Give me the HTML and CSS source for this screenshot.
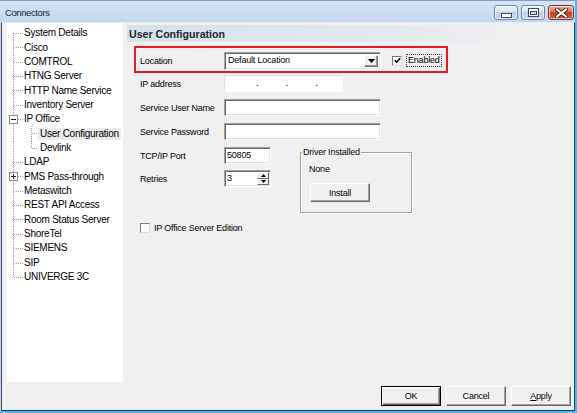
FILE: index.html
```html
<!DOCTYPE html>
<html>
<head>
<meta charset="utf-8">
<title>Connectors</title>
<link rel="stylesheet" href="styles.css">
</head>
<body>
<div class="window">
  <div class="titlebar">
    <span class="title">Connectors</span>
    <div class="caption-buttons">
      <span class="cb cb-min"><svg width="11" height="5" viewBox="0 0 11 5"><rect x="0.5" y="0.5" width="10" height="4" fill="#fff" stroke="#394a61"/></svg></span>
      <span class="cb cb-max"><svg width="11" height="9" viewBox="0 0 11 9"><rect x="0.5" y="0.5" width="10" height="8" fill="#fff" stroke="#394a61"/><rect x="2.5" y="3.5" width="6" height="3" fill="#c8d8ec" stroke="#394a61"/></svg></span>
      <span class="cb cb-close"><svg width="13" height="10" viewBox="0 0 13 10"><path d="M2 1.5 L11 8.5 M11 1.5 L2 8.5" stroke="#5a1a10" stroke-width="4" stroke-linecap="square"/><path d="M2 1.5 L11 8.5 M11 1.5 L2 8.5" stroke="#fff" stroke-width="2" stroke-linecap="square"/></svg></span>
    </div>
  </div>
  <div class="client">
    <div class="main">
      <div class="tree">
        <div class="node"><span class="g g-first"></span><span class="text">System Details</span></div>
        <div class="node"><span class="g g-mid"></span><span class="text">Cisco</span></div>
        <div class="node"><span class="g g-mid"></span><span class="text">COMTROL</span></div>
        <div class="node"><span class="g g-mid"></span><span class="text">HTNG Server</span></div>
        <div class="node"><span class="g g-mid"></span><span class="text">HTTP Name Service</span></div>
        <div class="node"><span class="g g-mid"></span><span class="text">Inventory Server</span></div>
        <div class="node"><span class="g g-mid g-box"><svg width="9" height="9" viewBox="0 0 9 9"><rect x="0.5" y="0.5" width="8" height="8" fill="#fff" stroke="#8e8f8f"/><path d="M2 4.5h5" stroke="#222"/></svg></span><span class="text">IP Office</span></div>
        <div class="node"><span class="g g-pass"></span><span class="g2 g2-mid"></span><span class="text sel">User Configuration</span></div>
        <div class="node"><span class="g g-pass"></span><span class="g2 g2-last"></span><span class="text sub">Devlink</span></div>
        <div class="node"><span class="g g-mid"></span><span class="text">LDAP</span></div>
        <div class="node"><span class="g g-mid g-box"><svg width="9" height="9" viewBox="0 0 9 9"><rect x="0.5" y="0.5" width="8" height="8" fill="#fff" stroke="#8e8f8f"/><path d="M2 4.5h5M4.5 2v5" stroke="#222"/></svg></span><span class="text">PMS Pass-through</span></div>
        <div class="node"><span class="g g-mid"></span><span class="text">Metaswitch</span></div>
        <div class="node"><span class="g g-mid"></span><span class="text">REST API Access</span></div>
        <div class="node"><span class="g g-mid"></span><span class="text">Room Status Server</span></div>
        <div class="node"><span class="g g-mid"></span><span class="text">ShoreTel</span></div>
        <div class="node"><span class="g g-mid"></span><span class="text">SIEMENS</span></div>
        <div class="node"><span class="g g-mid"></span><span class="text">SIP</span></div>
        <div class="node"><span class="g g-last"></span><span class="text">UNIVERGE 3C</span></div>
      </div>
      <div class="panel">
        <div class="panel-header">User Configuration</div>
        <div class="form">
          <div class="highlight">
            <span class="label">Location</span>
            <div class="combo">
              <span class="combo-text">Default Location</span>
              <span class="combo-btn"><svg width="7" height="4" viewBox="0 0 7 4"><path d="M0 0h7L3.5 4z" fill="#000"/></svg></span>
            </div>
            <span class="check"><svg width="7" height="7" viewBox="0 0 7 7"><path d="M0.8 3.2 L2.6 5.2 L6.2 1.2" fill="none" stroke="#000" stroke-width="1.5"/></svg></span>
            <span class="focus-label">Enabled</span>
          </div>
          <div class="row row-ip">
            <span class="label">IP address</span>
            <div class="ipfield"><span class="dot">.</span><span class="dot">.</span><span class="dot">.</span></div>
          </div>
          <div class="row row-gap">
            <span class="label">Service User Name</span>
            <div class="field field-wide"></div>
          </div>
          <div class="row row-gap">
            <span class="label">Service Password</span>
            <div class="field field-wide"></div>
          </div>
          <div class="ports">
            <div class="ports-left">
              <div class="row row-tcp">
                <span class="label">TCP/IP Port</span>
                <div class="field field-short">50805</div>
              </div>
              <div class="row row-retries">
                <span class="label">Retries</span>
                <div class="field field-short spin">
                  <span class="spin-text">3</span>
                  <span class="spin-btns">
                    <span class="spin-btn"><svg width="5" height="3" viewBox="0 0 5 3"><path d="M2.5 0L5 3H0z" fill="#000"/></svg></span>
                    <span class="spin-btn"><svg width="5" height="3" viewBox="0 0 5 3"><path d="M0 0h5L2.5 3z" fill="#000"/></svg></span>
                  </span>
                </div>
              </div>
            </div>
            <fieldset class="group">
              <legend>Driver Installed</legend>
              <div class="none">None</div>
              <button class="btn btn-install">Install</button>
            </fieldset>
          </div>
          <div class="row row-check">
            <span class="check"></span>
            <span class="check-label">IP Office Server Edition</span>
          </div>
        </div>
      </div>
    </div>
    <div class="buttonbar">
      <button class="btn btn-default">OK</button>
      <button class="btn">Cancel</button>
      <button class="btn"><u>A</u>pply</button>
    </div>
  </div>
</div>
</body>
</html>
```

FILE: styles.css
```css
html, body {
  margin: 0;
  padding: 0;
}
body {
  width: 577px;
  height: 413px;
  overflow: hidden;
  font-family: "Liberation Sans", Arial, sans-serif;
  color: #111;
}
.window {
  box-sizing: border-box;
  width: 577px;
  height: 413px;
  display: flex;
  flex-direction: column;
  background: linear-gradient(#d4e4f5, #c2d7ee 21px, #c2d7ee);
  border-top: 1px solid #7f9dbf;
  border-right: 2px solid #46b8ee;
  border-bottom: 2px solid #46b8ee;
}
.titlebar {
  height: 21px;
  flex: none;
  display: flex;
  align-items: center;
  padding: 0 1px 0 5px;
}
.title {
  font-size: 9.5px;
  letter-spacing: -0.4px;
  color: #1b2430;
  flex: 1;
  position: relative;
  top: 1px;
}
.caption-buttons {
  display: flex;
  gap: 3px;
  align-self: flex-start;
  margin-top: 4px;
}
.cb {
  box-sizing: border-box;
  height: 15px;
  width: 24px;
  display: flex;
  align-items: center;
  justify-content: center;
  border: 1px solid #6f87a6;
  border-radius: 3px;
  background: linear-gradient(#eef4fb, #d3e1f1 45%, #bccfe6 50%, #c9daee);
  box-shadow: inset 0 0 0 1px rgba(255,255,255,0.6);
}
.cb-min svg { margin-top: 5px; }
.cb-close {
  width: 26px;
  border-color: #7c2f23;
  background: linear-gradient(#eab2a4, #d87560 45%, #c2412a 50%, #d0614a);
}
.client {
  flex: 1;
  display: flex;
  flex-direction: column;
  margin-left: 1px;
  background: #f0f0f0;
  border-left: 1px solid #3b4857;
  border-right: 1px solid #2e3a48;
  border-bottom: 1px solid #2e3a48;
  border-top: 1px solid #e6eef7;
}
.main {
  height: 359px;
  flex: none;
  display: flex;
}
.tree {
  box-sizing: border-box;
  width: 116px;
  margin-left: 5px;
  background: #fff;
  padding-top: 3px;
  font-size: 10px;
  letter-spacing: -0.25px;
  color: #000;
}
.node {
  display: flex;
  height: 14.35px;
  align-items: center;
  white-space: nowrap;
}
.g {
  flex: none;
  width: 17px;
  align-self: stretch;
  background-repeat: no-repeat;
  display: flex;
  align-items: center;
}
.g-mid, .g-first, .g-last {
  background-image:
    repeating-linear-gradient(to right, #a0a0a0 0 1px, transparent 1px 2px),
    repeating-linear-gradient(to bottom, #a0a0a0 0 1px, transparent 1px 2px);
  background-size: 9px 1px, 1px 100%;
  background-position: 7px 7px, 6px 0;
}
.g-first {
  background-size: 9px 1px, 1px 8px;
  background-position: 7px 7px, 6px 7px;
}
.g-last {
  background-size: 9px 1px, 1px 8px;
  background-position: 7px 7px, 6px 0;
}
.g-box svg {
  margin-left: 2px;
}
.g-pass {
  background-image: repeating-linear-gradient(to bottom, #a0a0a0 0 1px, transparent 1px 2px);
  background-size: 1px 100%;
  background-position: 6px 0;
}
.g2 {
  flex: none;
  width: 14px;
  align-self: stretch;
  background-repeat: no-repeat;
  background-image:
    repeating-linear-gradient(to right, #a0a0a0 0 1px, transparent 1px 2px),
    repeating-linear-gradient(to bottom, #a0a0a0 0 1px, transparent 1px 2px);
  background-size: 7px 1px, 1px 100%;
  background-position: 8px 7px, 7px 0;
}
.g2-last {
  background-size: 7px 1px, 1px 8px;
}
.text {
  line-height: 12px;
}
.sub {
  padding-left: 2px;
}
.sel {
  padding: 0 2px;
  background: #ebebeb;
}
.panel {
  flex: 1;
  margin: 0 2px 0 4px;
  display: flex;
  flex-direction: column;
}
.panel-header {
  margin-top: 2px;
  height: 17px;
  line-height: 18px;
  padding-left: 2px;
  font-weight: bold;
  font-size: 10.6px;
  color: #1c2733;
  background: linear-gradient(to right, #d8e0e9, #e4e9ef 60%, #eef0f2 88%, #f0f0f0);
}
.form {
  padding-left: 7px;
  font-size: 9px;
  letter-spacing: -0.2px;
  color: #000;
}
.highlight {
  box-sizing: border-box;
  margin-top: 4px;
  width: 314px;
  height: 27px;
  border: 2px solid #e31b25;
  display: flex;
  align-items: center;
  padding: 2px 0 0 4px;
}
.label {
  width: 84px;
  flex: none;
  white-space: nowrap;
}
.field, .combo, .ipfield {
  box-sizing: border-box;
  height: 17px;
  background: #fff;
  border-style: solid;
  border-width: 1px;
  border-color: #a0a0a0 #fff #fff #a0a0a0;
  box-shadow: inset 1px 1px 0 #696969, inset -1px -1px 0 #e3e3e3;
  line-height: 15px;
  padding-left: 1px;
}
.combo {
  width: 157px;
  height: 18px;
  display: flex;
  align-items: center;
  justify-content: space-between;
  padding: 2px;
}
.combo-text {
  padding-left: 1px;
}
.combo-btn {
  box-sizing: border-box;
  width: 14px;
  height: 12px;
  display: flex;
  align-items: center;
  justify-content: center;
  background: #f0f0f0;
  border-style: solid;
  border-width: 1px;
  border-color: #fff #696969 #696969 #fff;
  box-shadow: inset -1px -1px 0 #a0a0a0;
}
.check {
  box-sizing: border-box;
  flex: none;
  width: 10px;
  height: 10px;
  background: #fff;
  border-style: solid;
  border-width: 1px;
  border-color: #7a7a7a #dcdcdc #dcdcdc #7a7a7a;
  display: flex;
  align-items: center;
  justify-content: center;
}
.highlight .check {
  margin-left: 11px;
}
.focus-label {
  margin-left: 4px;
  padding: 0 1px;
  line-height: 11px;
  border: 1px dotted #3a3a3a;
}
.row {
  display: flex;
  align-items: center;
  padding-left: 6px;
}
.row-ip {
  margin-top: 2px;
}
.row-gap {
  margin-top: 7px;
}
.ipfield {
  width: 119px;
  border-color: #e4e4e4 #fff #fff #e4e4e4;
  box-shadow: inset 1px 1px 0 #f4f4f4;
  display: flex;
  padding-left: 31px;
  gap: 27px;
}
.dot {
  line-height: 13px;
  font-size: 10px;
}
.field-wide {
  width: 157px;
}
.ports {
  display: flex;
  margin-top: 6px;
}
.ports-left {
  flex: none;
}
.row-tcp {
  margin-top: 1px;
}
.row-retries {
  margin-top: 6px;
}
.field-short {
  width: 47px;
  padding-left: 2px;
}
.spin {
  display: flex;
  justify-content: space-between;
  padding: 1px 1px 1px 2px;
  line-height: 13px;
}
.spin-btns {
  display: flex;
  flex-direction: column;
  width: 12px;
}
.spin-btn {
  box-sizing: border-box;
  flex: 1;
  display: flex;
  align-items: center;
  justify-content: center;
  background: #f0f0f0;
  border-style: solid;
  border-width: 1px;
  border-color: #fff #696969 #696969 #fff;
}
.group {
  box-sizing: border-box;
  margin: 0 0 0 29px;
  padding: 0 0 0 1px;
  width: 112px;
  height: 67px;
  border: 1px solid #a0a0a0;
  box-shadow: inset 1px 1px 0 #fff, 1px 1px 0 #fff;
  min-width: 0;
}
.group legend {
  padding: 0 1px;
  line-height: 12px;
}
.none {
  margin: 5px 0 0 7px;
  line-height: 12px;
}
.btn {
  box-sizing: border-box;
  width: 60px;
  height: 20px;
  padding: 0;
  font-family: "Liberation Sans", Arial, sans-serif;
  font-size: 9px;
  letter-spacing: -0.2px;
  color: #000;
  background: #f0f0f0;
  border-style: solid;
  border-width: 1px;
  border-color: #fff #696969 #696969 #fff;
  box-shadow: inset -1px -1px 0 #a0a0a0;
  border-radius: 0;
}
.btn-install {
  display: block;
  margin: 8px 0 0 8px;
  height: 19px;
}
.btn-default {
  border: 1px solid #000;
  box-shadow: inset 1px 1px 0 #fff, inset -1px -1px 0 #696969, inset -2px -2px 0 #a0a0a0;
}
.row-check {
  margin-top: 8px;
  height: 13px;
}
.check-label {
  margin-left: 4px;
}
.buttonbar {
  flex: 1;
  display: flex;
  justify-content: flex-end;
  align-items: flex-start;
  gap: 5px;
  padding: 4px 3px 0 0;
}
```
